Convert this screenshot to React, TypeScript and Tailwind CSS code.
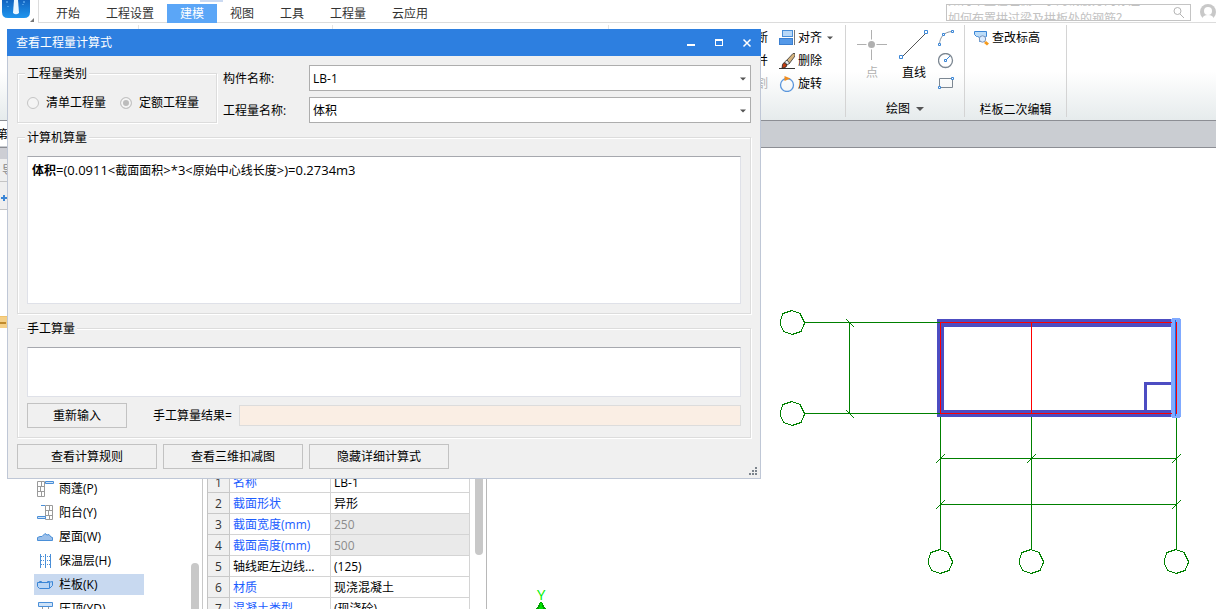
import { useState } from "react";
import type { ReactNode } from "react";
import clsx from "clsx";

const TABS = ["开始", "工程设置", "建模", "视图", "工具", "工程量", "云应用"];

const NAV_ITEMS = [
  { label: "雨蓬(P)", icon: <CanopyIcon /> },
  { label: "阳台(Y)", icon: <BalconyIcon /> },
  { label: "屋面(W)", icon: <RoofIcon /> },
  { label: "保温层(H)", icon: <InsulationIcon /> },
  { label: "栏板(K)", icon: <RailingIcon /> },
  { label: "压顶(YD)", icon: <CopingIcon /> },
];

const PROPERTIES = [
  { name: "名称", value: "LB-1", blue: true },
  { name: "截面形状", value: "异形", blue: true },
  { name: "截面宽度(mm)", value: "250", blue: true, locked: true },
  { name: "截面高度(mm)", value: "500", blue: true, locked: true },
  { name: "轴线距左边线...", value: "(125)" },
  { name: "材质", value: "现浇混凝土", blue: true },
  { name: "混凝土类型", value: "(现浇砼)", blue: true },
];

function CanopyIcon() {
  return (
    <svg width="17" height="16" fill="none" stroke="#9a9a9a">
      <path d="M.5.500v15h7v-15zM4.500 1v4M1 5.500h6M3.500 6v4M1 10.500h6M4.500 11v4" />
      <path d="M8.500.5h8v2h-8z" stroke="#4a8fd8" fill="#cfe3f8" />
    </svg>
  );
}

function BalconyIcon() {
  return (
    <svg width="17" height="16" fill="none" stroke="#9a9a9a">
      <path d="M8.500.5h7v14h-7zM12.500 1v4M9 5.500h6M11.500 6v4M9 10.500h6M12.500 11v4" />
      <path d="M4 .5h4M.5 11.500h8v2h-8z" stroke="#4a8fd8" fill="#cfe3f8" />
    </svg>
  );
}

function RoofIcon() {
  return (
    <svg width="17" height="10" stroke="#4a8fd8" fill="#9cc0ea">
      <path d="M.5 8.500v-3L3 4.500h2l3-3 2 1.500 2-.5 2 2.500 1.500.5v3z" />
    </svg>
  );
}

function InsulationIcon() {
  return (
    <svg width="17" height="14" stroke="#4a8fd8" fill="none">
      <path d="M3.500 0v14M13.500 0v14M8.500 0v14" />
      <path d="M4 2.500h10M4 6.500h10M4 10.500h10" strokeDasharray="1 1" />
    </svg>
  );
}

function RailingIcon() {
  return (
    <svg width="17" height="10" stroke="#3b86d6" fill="#b9d5f5">
      <path d="M.5 2.500h11l4-1v4l-3 3H2.500L.5 6.500z" />
      <path d="M2.500 2.500v-1h2v1M10.500 2.500v-1h2v1M12.500 3v5" fill="none" />
    </svg>
  );
}

function CopingIcon() {
  return (
    <svg width="17" height="16" fill="none">
      <path d="M1.500 1.500h14v4h-14z" stroke="#4a8fd8" fill="#cfe3f8" />
      <path d="M5.500 6v10M11.500 6v10" stroke="#9a9a9a" />
    </svg>
  );
}

function AlignIcon() {
  return (
    <svg width="16" height="16" shapeRendering="crispEdges">
      <path d="M3.500.5h10v6h-10z" fill="#b8d8f8" stroke="#4a8fd8" />
      <path d="M.5 8.500h13v6H.5z" fill="#5599e8" stroke="#3b7fd0" />
      <path d="M15.500 0v15" stroke="#777" />
    </svg>
  );
}

function BrushIcon() {
  return (
    <svg width="16" height="16">
      <path d="M0 15.500h16" stroke="#333" />
      <path d="M7 8L14 .5h2V3L10 11z" fill="#d4b27c" stroke="#333" strokeWidth=".8" />
      <path d="M5.500 9L8 7l2.500 3L8.500 12z" fill="#e8e8e8" stroke="#333" strokeWidth=".8" />
      <path d="M5 9.500L8 12l-1 2-4 1.500.5-4z" fill="#c43c10" stroke="#222" strokeWidth=".8" />
    </svg>
  );
}

function RotateIcon() {
  return (
    <svg width="16" height="16" fill="none">
      <circle cx="8" cy="9" r="6.500" stroke="#5a96dc" strokeWidth="1.300" />
      <path d="M5.500 0l6 2.500-6 2.500z" fill="#f08c1e" />
    </svg>
  );
}

function ElevationIcon() {
  return (
    <svg width="16" height="16" fill="none">
      <path d="M1.500 1.500h12v5l-2 1v4h-5v-4l-2-1h-1l-2-2z" fill="#bcdcf8" stroke="#3b86d6" />
      <circle cx="9.500" cy="9" r="3.200" fill="#dcecff" stroke="#7a93b8" />
      <path d="M13 11l3 2.500-2 2-3-2.500z" fill="#f59a1c" />
    </svg>
  );
}

function PointIcon() {
  return (
    <svg width="30" height="30" stroke="#b0b0b0">
      <path d="M14.500 0v30M0 14.500h30" />
      <circle cx="14.500" cy="14.500" r="5" fill="#fff" stroke="none" />
      <circle cx="14.500" cy="14.500" r="3.500" fill="#b0b0b0" stroke="none" />
    </svg>
  );
}

function LineIcon() {
  return (
    <svg width="30" height="30" fill="#fff">
      <path d="M3 27L27 3" stroke="#555" />
      <path d="M.5 25.500h3v3h-3zM25.500.5h3v3h-3z" stroke="#3b86d6" />
    </svg>
  );
}

function ArcIcon() {
  return (
    <svg width="16" height="16" fill="none">
      <path d="M1.500 14C2 7 6 2 14 1.500" stroke="#8a949e" />
      <path d="M.5 13.500h2v2h-2zM4.500 3.500h2v2h-2zM13.500.5h2v2h-2z" stroke="#3b86d6" fill="#fff" />
    </svg>
  );
}

function CircleIcon() {
  return (
    <svg width="16" height="16" fill="none">
      <circle cx="7.500" cy="7.500" r="7" stroke="#7c8792" strokeWidth="1.300" />
      <path d="M8 7l4-4" stroke="#3b86d6" />
      <path d="M6.500 6.500h2v2h-2z" stroke="#3b86d6" fill="#fff" />
    </svg>
  );
}

function RectIcon() {
  return (
    <svg width="16" height="16" fill="none">
      <path d="M1.500 2.500h13v9h-13z" stroke="#7c8792" />
      <path d="M.5 10.500h2v2h-2zM13.500 1.500h2v2h-2z" stroke="#3b86d6" fill="#fff" />
    </svg>
  );
}

function DownArrow({ className }: { className?: string }) {
  return (
    <svg width="8" height="4" viewBox="0 0 8 4" className={className} fill="#555">
      <path d="M0 0h8L4 4z" />
    </svg>
  );
}

function TabBar() {
  const [active, setActive] = useState("建模");
  return (
    <header className="relative flex h-[23px] shrink-0 border-b border-[#dcdcdc] bg-white">
      <div className="-mb-px w-[39px] shrink-0 border-r border-[#dcdcdc] bg-white">
        <svg width="36" height="22">
          <defs>
            <linearGradient id="logo" x2="0" y2="1">
              <stop offset="0" stopColor="#1264c0" />
              <stop offset="1" stopColor="#1f95ee" />
            </linearGradient>
          </defs>
          <path d="M2 0h28v12q0 6-6 6H8q-6 0-6-6z" fill="url(#logo)" />
          <path d="M14 0h4l1 13q-3 2.500-6 0z" fill="#eaf6ff" />
          <path d="M7 1v2M24 1v2M23 4v1M8 6v1" stroke="#7cc4ff" />
          <path d="M34 18v4h-4z" fill="#777" />
        </svg>
      </div>
      <div className="absolute left-[200px] top-0 h-[2px] w-[23px] bg-[#cbdaf2]" />
      <nav className="-mb-px flex pl-1 pt-1">
        {TABS.map((tab) => (
          <button
            key={tab}
            onClick={() => setActive(tab)}
            className={clsx(
              "flex h-[19px] items-center px-[13px]",
              tab === active ? "bg-[#5ba6f7] text-white" : "text-[#333]",
            )}
          >
            {tab}
          </button>
        ))}
      </nav>
      <div className="ml-auto flex items-start gap-[9px] pt-1">
        <div className="relative flex h-[17px] w-[245px] overflow-hidden border border-[#c4c4c4]">
          <div className="absolute -top-3 left-px flex flex-col gap-0.5 whitespace-nowrap leading-[16px] text-[#c2c2c2]">
            <span>如何布置在左侧显示的钢筋方向标注</span>
            <span>如何布置拱过梁及拱板处的钢筋？</span>
          </div>
          <input aria-label="搜索" className="relative w-full bg-transparent outline-none" />
          <svg width="14" height="14" className="mr-1 shrink-0" fill="none" stroke="#b4b4b4">
            <circle cx="5.500" cy="6" r="3.500" />
            <path d="M8 9l4 4" />
          </svg>
        </div>
        <svg width="16" height="17" aria-hidden="true">
          <circle cx="8" cy="8" r="8" fill="#c8c8c8" />
          <circle cx="8" cy="7" r="4" fill="#fff" />
          <path d="M2 15q1-4 6-4t6 4l-3 2H5z" fill="#fff" />
        </svg>
      </div>
    </header>
  );
}

function SmallTool({ icon, label, disabled, menu }: { icon?: ReactNode; label: string; disabled?: boolean; menu?: boolean }) {
  return (
    <button
      disabled={disabled}
      className={clsx("flex h-[23px] items-center gap-[3px]", disabled ? "text-[#b0b0b0]" : "text-black")}
    >
      {icon}
      {label}
      {menu && <DownArrow className="ml-0.5 w-[6px]" />}
    </button>
  );
}

function Ribbon() {
  return (
    <div className="flex h-[97px] shrink-0 bg-linear-to-b from-white from-50% to-[#e6ebec] pb-[3px] pt-0.5">
      <div className="w-[139px] shrink-0 border-r border-[#e4e4e4]" />
      <div className="w-[194px] shrink-0 border-r border-[#e4e4e4]" />
      <div className="w-[276px] shrink-0 border-r border-[#e4e4e4]" />
      <div className="flex w-[237px] shrink-0 justify-end gap-[11px] border-r border-[#d4d4d4] pr-3 pt-px">
        <div className="flex flex-col">
          <SmallTool label="打断" />
          <SmallTool label="合并" />
          <SmallTool label="分割" disabled />
        </div>
        <div className="flex flex-col">
          <SmallTool icon={<AlignIcon />} label="对齐" menu />
          <SmallTool icon={<BrushIcon />} label="删除" />
          <SmallTool icon={<RotateIcon />} label="旋转" />
        </div>
      </div>
      <div className="flex w-[119px] shrink-0 flex-col justify-between border-r border-[#d4d4d4]">
        <div className="flex justify-end pr-[10px] pt-px">
          <button disabled className="flex w-[42px] flex-col items-center pt-1 text-[#b0b0b0]">
            <PointIcon />
            <span className="pt-[5px] leading-[16px]">点</span>
          </button>
          <button className="flex w-[42px] flex-col items-center pt-1">
            <LineIcon />
            <span className="pt-[5px] leading-[16px]">直线</span>
          </button>
          <div className="ml-[3px] flex flex-col">
            <button aria-label="弧" className="flex h-[23px] items-center"><ArcIcon /></button>
            <button aria-label="圆" className="flex h-[23px] items-center"><CircleIcon /></button>
            <button aria-label="矩形" className="flex h-[23px] items-center"><RectIcon /></button>
          </div>
        </div>
        <button className="flex items-center justify-center gap-1.5 leading-[16px]">
          绘图
          <DownArrow />
        </button>
      </div>
      <div className="flex w-[102px] shrink-0 flex-col justify-between border-r border-[#d4d4d4]">
        <div className="flex pl-2 pt-px">
          <SmallTool icon={<ElevationIcon />} label="查改标高" />
        </div>
        <span className="text-center leading-[14px]">栏板二次编辑</span>
      </div>
    </div>
  );
}

function NavTree() {
  const [active, setActive] = useState("栏板(K)");
  return (
    <aside className="flex w-[203px] shrink-0 flex-col border-r border-[#c8c8c8] bg-white">
      <div className="h-[11px] shrink-0 bg-[#cdced4]" />
      <div className="flex h-[23px] shrink-0 items-center border-b border-[#c4c4c4] bg-[#efefef] pl-0.5 pt-px text-[#888]">导</div>
      <div className="flex h-7 shrink-0 items-center border-b border-[#c4c4c4] bg-[#efefef] pt-1">
        <svg width="8" height="8" stroke="#3b86d6" strokeWidth="2">
          <path d="M4 1v6M1 4h6" />
        </svg>
      </div>
      <div className="flex min-h-0 flex-1">
        <div className="flex-1 overflow-hidden">
          <div className="mt-[106px] flex h-3 items-center border-t border-[#f0c36c] bg-[#f5cf85]">
            <span className="h-0.5 w-1.5 bg-[#c08a2c]" />
          </div>
          <ul className="mt-[150px] flex flex-col gap-[3px] pl-[34px]">
            {NAV_ITEMS.map(({ label, icon }) => (
              <li key={label}>
                <button
                  onClick={() => setActive(label)}
                  className={clsx(
                    "flex h-[21px] w-[110px] items-center gap-[5px] pl-[3px]",
                    active === label && "bg-[#c8d9f0]",
                  )}
                >
                  {icon}
                  {label}
                </button>
              </li>
            ))}
          </ul>
        </div>
        <div className="mr-[3px] mt-[353px] w-2 rounded-t-full bg-[#c8c8c8]" />
      </div>
    </aside>
  );
}

function PropertyPanel() {
  return (
    <section className="flex w-[284px] shrink-0 items-start overflow-hidden border-r border-[#b8b8b8] bg-white pl-1">
      <table className="mt-[324px] w-[263px] table-fixed border-separate border-spacing-0 border-l border-[#c4c4c4]">
        <colgroup>
          <col className="w-[22px]" />
          <col className="w-[101px]" />
          <col />
        </colgroup>
        <tbody>
          {PROPERTIES.map(({ name, value, blue, locked }, i) => (
            <tr key={name} className="h-[21px] leading-[16px]">
              <th className="border-b border-r border-[#c8c8c8] bg-[#f0f0f0] pt-0.5 font-normal text-[#333]">{i + 1}</th>
              <td className={clsx("whitespace-nowrap border-b border-r border-[#d4d4d4] pl-[3px] pt-0.5", blue && "text-[#1a5cff]")}>
                {name}
              </td>
              <td className={clsx("border-b border-r border-[#d4d4d4] pl-[3px] pt-0.5", locked && "bg-[#eaeaea] text-[#8c8c8c]")}>
                {value}
              </td>
            </tr>
          ))}
        </tbody>
      </table>
      <div className="ml-[5px] mt-[250px] h-[157px] w-2 rounded-full bg-[#c8c8c8]" />
    </section>
  );
}

const AXIS_MARKS = [
  [792, 322],
  [792, 413],
  [940, 561],
  [1031, 561],
  [1176, 561],
];

function Canvas() {
  return (
    <main className="min-w-0 flex-1 overflow-hidden bg-white">
      <svg className="h-full w-full" shapeRendering="crispEdges" fill="none">
        <g transform="translate(-487 -148)">
          <g stroke="#008000">
            {AXIS_MARKS.map(([x, y]) => (
              <polygon
                key={`${x}-${y}`}
                transform={`translate(${x} ${y}.500)`}
                points="0,-12 8,-9 12,-1 12,2 9,9 0,12 -8,9 -12,2 -12,-1 -9,-9"
              />
            ))}
            <path d="M804 322.500H940M804 413.500H940M849.500 322v91" />
            <path d="M846 319l8 8M846 410l8 8" />
            <path d="M940.500 413v136M1031.500 413v136M1176.500 413v136" />
            <path d="M940 458.500h236M940 504.500h236" />
            <path d="M936 463l9-9M1027 463l9-9M1172 463l9-9M936 509l9-9M1172 509l9-9" />
          </g>
          <g fill="#4d4dc2">
            <path d="M937 319h236v8H937zM937 410h236v7H937zM937 319h7v98h-7z" />
            <path d="M1144 382h28v3h-28zM1144 382h3v29h-3z" />
          </g>
          <path d="M1172 318h8v1h1v98h-1v1h-8v-1h-1v-98h1z" fill="#80aaff" />
          <path d="M1175.500 320v96" stroke="#1070f0" />
          <path d="M937 322.500h3M937 413.500h3" stroke="#008000" />
          <path d="M940 322.500h232M940 413.500h232M940.500 322v92M1031.500 322v92M1176.500 322v92" stroke="#f00" />
          <text x="537" y="600" fill="#00f000" fontSize="15" shapeRendering="auto">Y</text>
          <path d="M541 601l5 8v4h-10v-4z" fill="#00a000" />
          <path d="M541 601l2 8v4h-4v-4z" fill="#00e000" />
        </g>
      </svg>
    </main>
  );
}

function Group({ title, className, children }: { title: string; className?: string; children: ReactNode }) {
  return (
    <fieldset
      className={clsx(
        "min-w-0 border border-[#dcdcdc] px-[9px] pb-[9px] shadow-[1px_1px_0_#fff,inset_1px_1px_0_#fff]",
        className,
      )}
    >
      <legend className="-ml-0.5 h-4 bg-[#f0f0f0] px-0.5 leading-[18px]">{title}</legend>
      {children}
    </fieldset>
  );
}

function Field({ id, label, value }: { id: string; label: string; value: string }) {
  return (
    <div className="flex items-center">
      <label htmlFor={id} className="w-[86px] shrink-0 pt-0.5">{label}</label>
      <div className="relative flex-1">
        <select id={id} className="h-[26px] w-full appearance-none border border-[#adadad] bg-white pl-[3px] pt-0.5 outline-none">
          <option>{value}</option>
        </select>
        <DownArrow className="pointer-events-none absolute right-[5px] top-3 w-[6px]" />
      </div>
    </div>
  );
}

function Radio({ label, checked }: { label: string; checked?: boolean }) {
  return (
    <label className="flex items-center gap-[7px]">
      <input
        type="radio"
        name="category"
        disabled
        defaultChecked={checked}
        className="h-3 w-3 appearance-none rounded-full border border-[#c4c4c4] bg-[#f4f4f4] checked:bg-[#bcbcbc] checked:shadow-[inset_0_0_0_2px_#f4f4f4]"
      />
      {label}
    </label>
  );
}

function PushButton({ className, children }: { className: string; children: ReactNode }) {
  return (
    <button className={clsx("h-[25px] border border-[#c2c2c2] bg-[#f0f0f0] hover:bg-[#e6eef8]", className)}>
      {children}
    </button>
  );
}

function FormulaDialog() {
  return (
    <div role="dialog" aria-label="查看工程量计算式" className="absolute left-[7px] top-[29px] w-[754px] bg-[#f0f0f0]">
      <div className="flex h-[27px] items-center justify-between bg-[#2d7fe0] px-[9px] text-white">
        <h1>查看工程量计算式</h1>
        <div className="flex gap-[18px]">
          <button aria-label="最小化">
            <svg width="10" height="10"><path d="M1 6h8v2H1z" fill="#fff" /></svg>
          </button>
          <button aria-label="最大化">
            <svg width="10" height="10"><path d="M1 1h8v7H1zM2 3v4h6V3z" fill="#fff" fillRule="evenodd" /></svg>
          </button>
          <button aria-label="关闭">
            <svg width="10" height="10" stroke="#fff" strokeWidth="1.500"><path d="M1.500 1.500l7 7M8.500 1.500l-7 7" /></svg>
          </button>
        </div>
      </div>
      <div className="relative flex flex-col gap-1.5 border border-t-0 border-[#bfc7d6] p-[9px]">
        <div className="flex gap-1.5">
          <Group title="工程量类别" className="h-[58px] w-[200px]">
            <div className="flex justify-between pr-2 pt-[14px] leading-[16px]">
              <Radio label="清单工程量" />
              <Radio label="定额工程量" checked />
            </div>
          </Group>
          <div className="flex flex-1 flex-col gap-1.5">
            <Field id="component" label="构件名称:" value="LB-1" />
            <Field id="quantity" label="工程量名称:" value="体积" />
          </div>
        </div>
        <Group title="计算机算量">
          <output className="mt-[11px] block h-[148px] border border-[#dfe1e8] border-t-[#a6a8ae] bg-white px-1 pt-[5px] text-[13px] leading-[16px]">
            <b className="text-xs">体积</b>=(0.0911&lt;<span className="text-xs">截面面积</span>&gt;*3&lt;
            <span className="text-xs">原始中心线长度</span>&gt;)=0.2734m3
          </output>
        </Group>
        <Group title="手工算量">
          <textarea
            aria-label="手工算量"
            className="mt-[11px] block h-[50px] w-full resize-none border border-[#dfe1e8] border-t-[#a6a8ae] bg-white px-1 outline-none"
          />
          <div className="mt-1.5 flex items-center">
            <PushButton className="w-[100px]">重新输入</PushButton>
            <label htmlFor="result" className="ml-[26px] mr-[7px]">手工算量结果=</label>
            <input
              id="result"
              readOnly
              className="h-[21px] min-w-0 flex-1 border border-[#dcdcdc] bg-[#faeee4] px-1 outline-none"
            />
          </div>
        </Group>
        <div className="flex gap-1.5">
          <PushButton className="w-[140px]">查看计算规则</PushButton>
          <PushButton className="w-[140px]">查看三维扣减图</PushButton>
          <PushButton className="w-[140px]">隐藏详细计算式</PushButton>
        </div>
        <svg width="8" height="8" className="absolute bottom-[3px] right-[3px]" fill="#7c848c">
          <path d="M6 0h2v2H6zM3 3h2v2H3zM6 3h2v2H6zM0 6h2v2H0zM3 6h2v2H3zM6 6h2v2H6z" />
        </svg>
      </div>
    </div>
  );
}

export default function App() {
  return (
    <div className="relative flex h-screen flex-col overflow-hidden bg-white font-['Open_Sans','Noto_Sans_CJK_SC',sans-serif] text-xs text-black">
      <TabBar />
      <Ribbon />
      <div className="h-7 shrink-0 border-y border-[#8c8e94] bg-[#cacdd2]">
        <div className="flex h-[25px] w-20 items-center bg-white pt-0.5">
          <span className="-ml-1">第</span>
        </div>
      </div>
      <div className="flex min-h-0 flex-1">
        <NavTree />
        <PropertyPanel />
        <Canvas />
      </div>
      <FormulaDialog />
    </div>
  );
}
